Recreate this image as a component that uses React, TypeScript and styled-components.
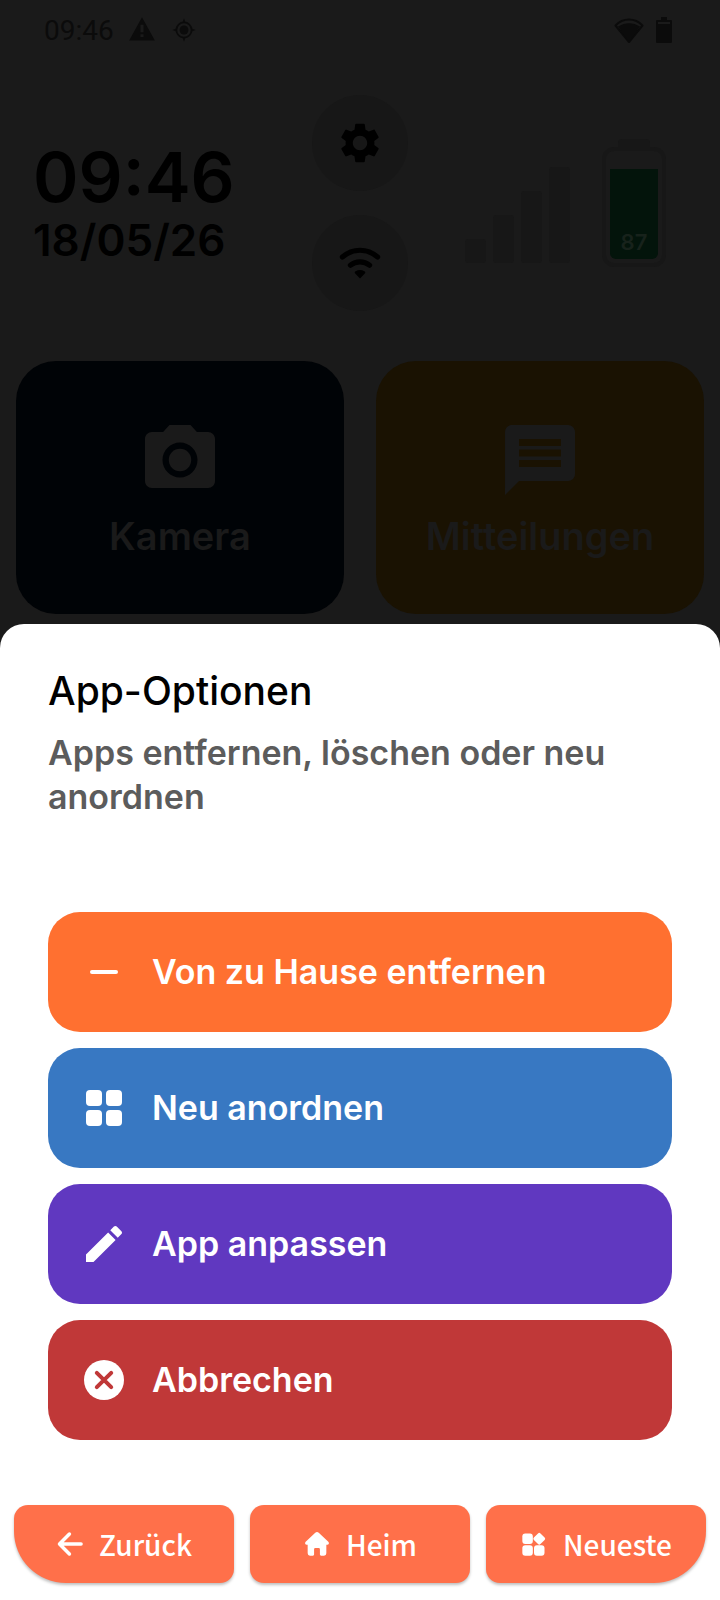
import React from 'react';
import styled, { createGlobalStyle } from 'styled-components';

const GlobalStyle = createGlobalStyle`
  *, *::before, *::after {
    box-sizing: border-box;
  }
  body {
    margin: 0;
    background: #1a1a1a;
    font-family: Inter, 'Liberation Sans', sans-serif;
    font-weight: 600;
  }
  h1, p {
    margin: 0;
    font-weight: inherit;
  }
  button {
    margin: 0;
    border: 0;
    font: inherit;
    cursor: pointer;
  }
  svg {
    display: block;
    flex: none;
  }
`;

const Screen = styled.div`
  display: flex;
  flex-direction: column;
  min-height: 100vh;
`;

/* Dimmed home screen */

const Home = styled.div`
  padding-bottom: 10px;
  color: #000;
`;

const StatusBar = styled.header`
  display: flex;
  align-items: center;
  justify-content: space-between;
  height: 60px;
  padding: 0 48px 0 44px;
  color: #0b0b0b;
`;

const StatusGroup = styled.div<{ $gap: number }>`
  display: flex;
  align-items: center;
  gap: ${(p) => p.$gap}px;
`;

const StatusTime = styled.time`
  padding-top: 2px;
  font: 400 28px/32px Roboto, sans-serif;
`;

const Widgets = styled.section`
  display: grid;
  grid-template-columns: 1fr auto 1fr;
  align-items: center;
  padding: 35px 33px 50px;
`;

const Clock = styled.div`
  padding-top: 2px;
`;

const ClockTime = styled.time`
  display: block;
  font-size: 69px;
  line-height: 72px;
`;

const ClockDate = styled.time`
  display: block;
  font-size: 44px;
  line-height: 54px;
`;

const RoundButtons = styled.div`
  display: flex;
  flex-direction: column;
  gap: 24px;
`;

const RoundButton = styled.button`
  display: grid;
  place-items: center;
  width: 96px;
  height: 96px;
  padding: 0;
  border-radius: 50%;
  background: #171717;
  color: #000;
`;

const Levels = styled.div`
  display: flex;
  align-items: flex-end;
  justify-content: flex-end;
  gap: 32px;
  padding-right: 21px;
`;

const SignalBars = styled.div`
  display: flex;
  align-items: flex-end;
  gap: 7px;
  padding-bottom: 4px;
`;

const SignalBar = styled.span<{ $height: number }>`
  width: 21px;
  height: ${(p) => p.$height}px;
  border-radius: 3px;
  background: #171717;
`;

const Battery = styled.div`
  display: flex;
  flex-direction: column;
  align-items: center;
`;

const BatteryCap = styled.span`
  width: 32px;
  height: 8px;
  border-radius: 4px 4px 0 0;
  background: #171717;
`;

const BatteryBody = styled.div`
  display: flex;
  align-items: flex-end;
  width: 64px;
  height: 120px;
  padding: 4px;
  border: 4px solid #171717;
  border-radius: 12px;
`;

const BatteryCharge = styled.div`
  display: flex;
  align-items: flex-end;
  justify-content: center;
  width: 100%;
  height: 90px;
  padding-bottom: 4px;
  border-radius: 0 0 6px 6px;
  background: #03140b;
  color: #17221b;
  font-size: 22px;
  line-height: 26px;
`;

const Tiles = styled.section`
  display: grid;
  grid-template-columns: 1fr 1fr;
  gap: 32px;
  padding: 0 16px;
`;

const Tile = styled.button<{ $background: string; $color: string }>`
  display: flex;
  flex-direction: column;
  align-items: center;
  gap: 10px;
  height: 253px;
  padding: 57px 0 0;
  border-radius: 40px;
  background: ${(p) => p.$background};
  color: ${(p) => p.$color};
  font-size: 38px;
  line-height: 48px;
`;

/* Bottom sheet */

const Sheet = styled.main`
  display: flex;
  flex: 1;
  flex-direction: column;
  border-radius: 24px 24px 0 0;
  background: #fff;
`;

const SheetBody = styled.div`
  flex: 1;
  padding: 43px 48px 48px;
`;

const Title = styled.h1`
  color: #000;
  font-size: 39px;
  font-weight: 500;
  line-height: 48px;
`;

const Description = styled.p`
  margin: 16px 0 93px;
  color: #5c5c5c;
  font-size: 34px;
  line-height: 44px;
`;

const Actions = styled.div`
  display: flex;
  flex-direction: column;
  gap: 16px;
`;

const Action = styled.button<{ $background: string }>`
  display: flex;
  align-items: center;
  gap: 24px;
  height: 120px;
  padding: 0 32px;
  border-radius: 32px;
  background: ${(p) => p.$background};
  color: #fff;
  font-size: 34px;
  line-height: 44px;
  text-align: left;
`;

const NavBar = styled.nav`
  display: grid;
  grid-template-columns: repeat(3, 1fr);
  gap: 16px;
  padding: 0 14px 17px;
`;

const NavButton = styled.button<{ $corner?: 'left' | 'right' }>`
  display: flex;
  align-items: center;
  justify-content: center;
  gap: 15px;
  height: 78px;
  padding: 0;
  border-radius: 14px 14px ${(p) => (p.$corner === 'right' ? '52px' : '14px')}
    ${(p) => (p.$corner === 'left' ? '52px' : '14px')};
  background: #ff704a;
  box-shadow: 0 2px 3px rgba(0, 0, 0, 0.25);
  color: #fff;
  font: 500 28px/40px 'Noto Sans CJK JP', 'Noto Sans', sans-serif;
`;

type IconProps = { size: number; children: React.ReactNode };

const Icon = ({ size, children }: IconProps) => (
  <svg width={size} height={size} viewBox="0 0 24 24" fill="currentColor" aria-hidden="true">
    {children}
  </svg>
);

const actions = [
  {
    label: 'Von zu Hause entfernen',
    background: '#ff7030',
    icon: <rect x="5" y="11" width="14" height="2" rx="1" />,
  },
  {
    label: 'Neu anordnen',
    background: '#3878c2',
    icon: (
      <>
        <rect x="3" y="3" width="8" height="8" rx="2" />
        <rect x="13" y="3" width="8" height="8" rx="2" />
        <rect x="3" y="13" width="8" height="8" rx="2" />
        <rect x="13" y="13" width="8" height="8" rx="2" />
      </>
    ),
  },
  {
    label: 'App anpassen',
    background: '#6038c0',
    icon: (
      <path d="M3 17.250V21h3.750L17.810 9.940l-3.750-3.750L3 17.250zM20.710 7.040c.39-.39.39-1.020 0-1.410l-2.340-2.340c-.39-.39-1.020-.39-1.410 0l-1.830 1.830 3.750 3.750 1.830-1.830z" />
    ),
  },
  {
    label: 'Abbrechen',
    background: '#c03838',
    icon: (
      <>
        <circle cx="12" cy="12" r="10" />
        <path d="M8.400 8.400l7.200 7.200M15.600 8.400l-7.200 7.200" stroke="#c03838" strokeWidth="2" strokeLinecap="round" />
      </>
    ),
  },
];

export default function App() {
  return (
    <>
      <GlobalStyle />
      <Screen>
        <Home>
          <StatusBar>
            <StatusGroup $gap={14}>
              <StatusTime>09:46</StatusTime>
              <Icon size={28}>
                <path d="M1 21h22L12 1 1 21zm12.300-3h-2.600v-2.400h2.600zm0-4h-2.600V7.500h2.600z" />
              </Icon>
              <Icon size={28}>
                <circle cx="12" cy="12" r="6.500" fill="none" stroke="currentColor" strokeWidth="1.500" />
                <circle cx="12" cy="12" r="3.800" />
                <path d="M12 2l1.300 3.500h-2.600zM12 22l1.300-3.500h-2.600zM2 12l3.500-1.300v2.600zM22 12l-3.500-1.300v2.600z" />
              </Icon>
            </StatusGroup>
            <StatusGroup $gap={12}>
              <svg width="30" height="26" viewBox="0 0 30 26" aria-hidden="true">
                <path
                  d="M15 25L1.500 8.500C9 0.500 21 0.500 28.500 8.500Z"
                  fill="none"
                  stroke="currentColor"
                  strokeWidth="2"
                  strokeLinejoin="round"
                />
                <path d="M15 25L4 9.500C11 5 19 5 26 9.500Z" fill="currentColor" />
              </svg>
              <svg width="16" height="26" viewBox="0 0 16 26" aria-hidden="true">
                <path
                  d="M5 0h6v3h4a1 1 0 0 1 1 1v21a1 1 0 0 1-1 1H1a1 1 0 0 1-1-1V4a1 1 0 0 1 1-1h4zM2 5v2h12V5z"
                  fill="currentColor"
                />
              </svg>
            </StatusGroup>
          </StatusBar>

          <Widgets>
            <Clock>
              <ClockTime>09:46</ClockTime>
              <ClockDate>18/05/26</ClockDate>
            </Clock>
            <RoundButtons>
              <RoundButton aria-label="Einstellungen">
                <Icon size={48}>
                  <path d="M19.140 12.940c.04-.3.06-.61.06-.94 0-.32-.02-.64-.07-.94l2.030-1.580c.18-.14.23-.41.12-.61l-1.920-3.320c-.12-.22-.37-.29-.59-.22l-2.390.96c-.5-.38-1.030-.7-1.620-.94l-.36-2.540c-.04-.24-.24-.41-.48-.41h-3.840c-.24 0-.43.17-.47.41l-.36 2.540c-.59.24-1.130.57-1.620.94l-2.390-.96c-.22-.08-.47 0-.59.22L2.740 8.870c-.12.21-.08.47.12.61l2.030 1.580c-.05.3-.09.63-.09.94s.02.64.07.94l-2.030 1.580c-.18.14-.23.41-.12.61l1.920 3.320c.12.22.37.29.59.22l2.390-.96c.5.38 1.030.7 1.620.94l.36 2.540c.05.24.24.41.48.41h3.840c.24 0 .44-.17.47-.41l.36-2.540c.59-.24 1.130-.56 1.620-.94l2.390.96c.22.08.47 0 .59-.22l1.920-3.320c.12-.22.07-.47-.12-.61l-2.010-1.580zM12 15.600c-1.980 0-3.600-1.620-3.600-3.600s1.620-3.600 3.600-3.600 3.600 1.620 3.600 3.600-1.620 3.600-3.600 3.600z" />
                </Icon>
              </RoundButton>
              <RoundButton aria-label="WLAN">
                <Icon size={48}>
                  <path
                    d="M3.200 9C8.400 4.500 15.600 4.500 20.800 9M7.200 13.100c2.800-2.200 6.800-2.200 9.600 0"
                    fill="none"
                    stroke="currentColor"
                    strokeWidth="2.600"
                    strokeLinecap="round"
                  />
                  <path d="M12 19.700l-2.300-2.300c-.5-.5-.5-1 .1-1.300 1.400-.8 3-.8 4.400 0 .6.3.6.8.1 1.300z" />
                </Icon>
              </RoundButton>
            </RoundButtons>
            <Levels>
              <SignalBars role="img" aria-label="Signalstärke">
                <SignalBar $height={24} />
                <SignalBar $height={48} />
                <SignalBar $height={72} />
                <SignalBar $height={96} />
              </SignalBars>
              <Battery>
                <BatteryCap />
                <BatteryBody>
                  <BatteryCharge>87</BatteryCharge>
                </BatteryBody>
              </Battery>
            </Levels>
          </Widgets>

          <Tiles>
            <Tile $background="#000306" $color="#1a1a1a">
              <Icon size={84}>
                <circle cx="12" cy="12" r="3.200" />
                <path d="M9 2L7.170 4H4c-1.100 0-2 .9-2 2v12c0 1.100.9 2 2 2h16c1.100 0 2-.9 2-2V6c0-1.100-.9-2-2-2h-3.170L15 2H9zm3 15c-2.760 0-5-2.240-5-5s2.240-5 5-5 5 2.240 5 5-2.240 5-5 5z" />
              </Icon>
              Kamera
            </Tile>
            <Tile $background="#1a1202" $color="#1a1a1a">
              <Icon size={84}>
                <path d="M20 2H4c-1.100 0-1.990.9-1.990 2L2 22l4-4h14c1.100 0 2-.9 2-2V4c0-1.100-.9-2-2-2zm-2 12H6v-2h12v2zm0-3H6V9h12v2zm0-3H6V6h12v2z" />
              </Icon>
              Mitteilungen
            </Tile>
          </Tiles>
        </Home>

        <Sheet>
          <SheetBody>
            <Title>App-Optionen</Title>
            <Description>Apps entfernen, löschen oder neu anordnen</Description>
            <Actions>
              {actions.map((action) => (
                <Action key={action.label} $background={action.background}>
                  <Icon size={48}>{action.icon}</Icon>
                  {action.label}
                </Action>
              ))}
            </Actions>
          </SheetBody>
          <NavBar>
            <NavButton $corner="left">
              <Icon size={28}>
                <path
                  d="M21.500 12H3.500M11.500 3.500L3 12l8.500 8.500"
                  fill="none"
                  stroke="currentColor"
                  strokeWidth="3"
                  strokeLinecap="round"
                  strokeLinejoin="round"
                />
              </Icon>
              Zurück
            </NavButton>
            <NavButton>
              <Icon size={28}>
                <path d="M10.500 2.400a2.200 2.200 0 0 1 3 0l8.200 7.600c1 1 .5 2.700-1 2.700H20V20a2 2 0 0 1-2 2h-2.500a1 1 0 0 1-1-1v-4.500a1 1 0 0 0-1-1h-3a1 1 0 0 0-1 1V21a1 1 0 0 1-1 1H6a2 2 0 0 1-2-2v-7.300h-.7c-1.500 0-2-1.700-1-2.700z" />
              </Icon>
              Heim
            </NavButton>
            <NavButton $corner="right">
              <Icon size={28}>
                <rect x="2" y="3" width="9" height="9" rx="2.500" />
                <rect x="2" y="13" width="9" height="9" rx="2.500" />
                <rect x="12" y="13" width="9" height="9" rx="2.500" />
                <rect x="12.500" y="3.500" width="8" height="8" rx="1.500" transform="rotate(45 16.500 7.500)" />
              </Icon>
              Neueste
            </NavButton>
          </NavBar>
        </Sheet>
      </Screen>
    </>
  );
}
